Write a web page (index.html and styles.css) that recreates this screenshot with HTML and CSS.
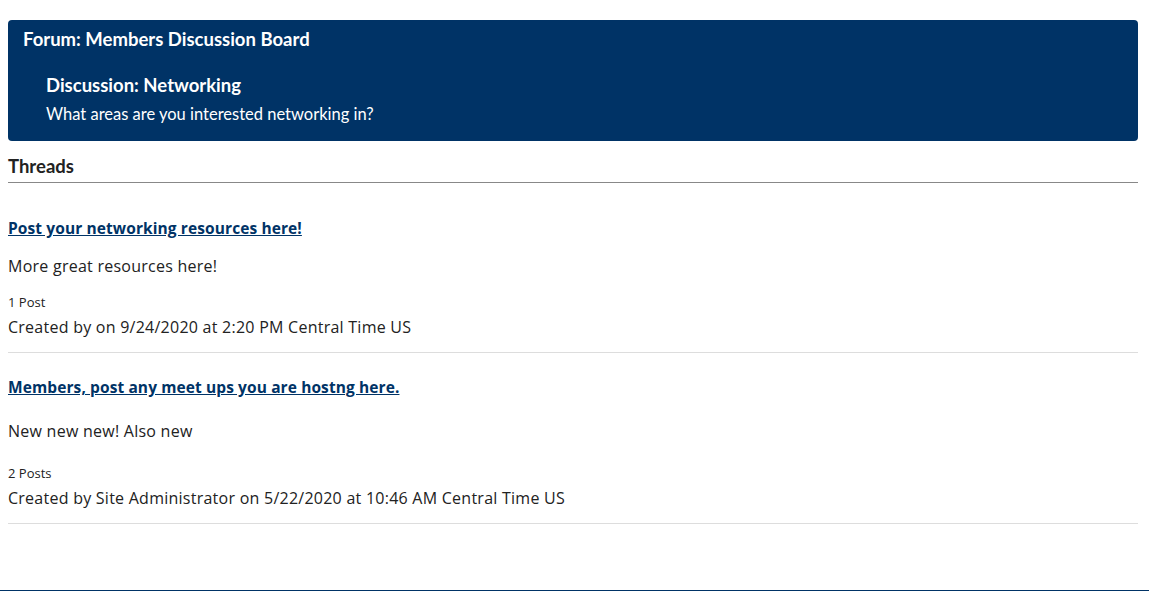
FILE: index.html
```html
<!DOCTYPE html>
<html lang="en">
<head>
<meta charset="utf-8">
<title>Forum</title>
<link rel="stylesheet" href="styles.css">
</head>
<body>
<div class="page">
  <section class="banner">
    <h1 class="forum-title">Forum: Members Discussion Board</h1>
    <div class="discussion">
      <h2 class="discussion-title">Discussion: Networking</h2>
      <p class="discussion-desc">What areas are you interested networking in?</p>
    </div>
  </section>
  <h3 class="threads-heading">Threads</h3>
  <ul class="threads">
    <li class="thread">
      <div class="thread-title"><a class="thread-link" href="#">Post your networking resources here!</a></div>
      <p class="thread-desc">More great resources here!</p>
      <div class="thread-count">1 Post</div>
      <div class="thread-meta">Created by  on 9/24/2020 at 2:20 PM Central Time US</div>
    </li>
    <li class="thread thread-tall">
      <div class="thread-title"><a class="thread-link" href="#">Members, post any meet ups you are hostng here.</a></div>
      <p class="thread-desc">New new new! Also new</p>
      <div class="thread-count">2 Posts</div>
      <div class="thread-meta">Created by Site Administrator on 5/22/2020 at 10:46 AM Central Time US</div>
    </li>
  </ul>
</div>
<footer class="footer"></footer>
</body>
</html>
```
FILE: styles.css
```css
html, body { margin: 0; padding: 0; background: #fff; }
body { font-family: "Open Sans", "Liberation Sans", sans-serif; color: #222; }
.page { padding: 20px 11px 0 8px; }
.banner {
  background: #003366;
  border-radius: 4px;
  color: #fff;
  padding: 7px 15px 16px 15px;
  font-family: Lato, "Liberation Sans", sans-serif;
}
.forum-title { margin: 0; font-size: 18.5px; font-weight: 700; line-height: 24px; }
.discussion { padding: 22px 0 0 23px; }
.discussion-title { margin: 0; font-size: 18.5px; font-weight: 700; line-height: 24px; }
.discussion-desc { margin: 6px 0 0; font-size: 16.5px; line-height: 22px; }
.threads-heading {
  margin: 14px 0 0;
  font-family: Lato, "Liberation Sans", sans-serif;
  font-size: 18.5px; font-weight: 700; line-height: 22px;
  padding-bottom: 5px;
  border-bottom: 1px solid #888;
  color: #222;
}
.threads { list-style: none; margin: 0; padding: 0; }
.thread { border-bottom: 1px solid #ddd; padding: 35px 0 15px; font-size: 16px; line-height: 20px; }
.thread + .thread { padding-top: 24px; }
.thread-title { height: 20px; line-height: 20px; }
.thread-link { color: #003366; font-weight: 700; font-size: 15.5px; line-height: 20px; text-decoration: underline; letter-spacing: 0.1px; }
.thread-desc { margin: 18px 0 0; font-size: 16px; letter-spacing: 0.25px; line-height: 20px; height: 20px; }
.thread-tall .thread-desc { margin-top: 24px; }
.thread-count { margin-top: 18px; font-size: 13px; line-height: 16px; height: 16px; }
.thread-tall .thread-count { margin-top: 24px; }
.thread-meta { margin-top: 7px; font-size: 16px; letter-spacing: 0.25px; line-height: 20px; height: 20px; }
.footer { margin-top: 66px; height: 4px; background: #003366; }
```
